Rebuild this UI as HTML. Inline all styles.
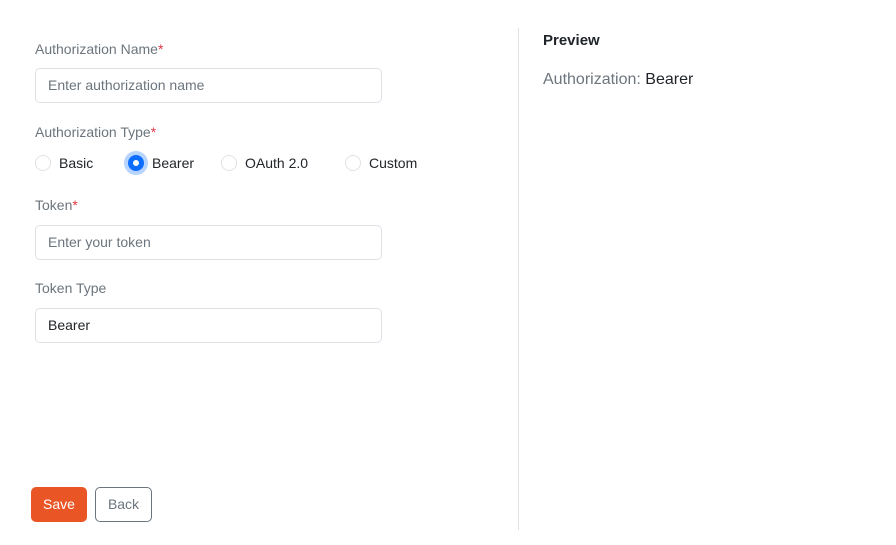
<!DOCTYPE html>
<html><head><style>
*{box-sizing:border-box;margin:0;padding:0}
body{width:896px;height:545px;background:#fff;font-family:"Liberation Sans",sans-serif;position:relative;overflow:hidden;color:#212529}
.abs{position:absolute}
.lbl{font-size:14px;color:#6c757d}
.lbl span{color:#dc3545}
.inp{position:absolute;left:35px;width:347px;height:35px;border:1px solid #dee2e6;border-radius:5px;font-size:14px;padding-left:12px;line-height:33px;color:#6c757d}
.r{position:absolute;top:155px;width:16px;height:16px;border:1px solid #dee2e6;border-radius:50%}
.rt{position:absolute;top:155px;font-size:14px;color:#212529}
</style></head><body>
<div class="abs lbl" style="left:35px;top:41px">Authorization Name<span>*</span></div>
<div class="inp" style="top:68px">Enter authorization name</div>
<div class="abs lbl" style="left:35px;top:124px">Authorization Type<span>*</span></div>
<div class="r" style="left:35px"></div><div class="rt" style="left:59px">Basic</div>
<div class="r" style="left:128px;background:#fff;border:5px solid #0d6efd;box-shadow:0 0 0 4px #b6d4fe"></div><div class="rt" style="left:152px">Bearer</div>
<div class="r" style="left:221px"></div><div class="rt" style="left:245px">OAuth 2.0</div>
<div class="r" style="left:345px"></div><div class="rt" style="left:369px">Custom</div>
<div class="abs lbl" style="left:35px;top:197px">Token<span>*</span></div>
<div class="inp" style="top:225px">Enter your token</div>
<div class="abs lbl" style="left:35px;top:280px">Token Type</div>
<div class="inp" style="top:308px;color:#212529">Bearer</div>
<div class="abs" style="left:31px;top:487px;width:56px;height:35px;background:#e95524;border-radius:5px;color:#fff;font-size:14px;text-align:center;line-height:35px">Save</div>
<div class="abs" style="left:95px;top:487px;width:57px;height:35px;border:1px solid #6c757d;border-radius:5px;color:#6c757d;font-size:14px;text-align:center;line-height:33px">Back</div>
<div class="abs" style="left:518px;top:28px;width:1px;height:502px;background:#dee2e6"></div>
<div class="abs" style="left:543px;top:32px;font-size:15px;font-weight:bold;color:#212529">Preview</div>
<div class="abs" style="left:543px;top:71px;font-size:16px;color:#6c757d">Authorization: <span style="color:#212529">Bearer</span></div>
</body></html>
